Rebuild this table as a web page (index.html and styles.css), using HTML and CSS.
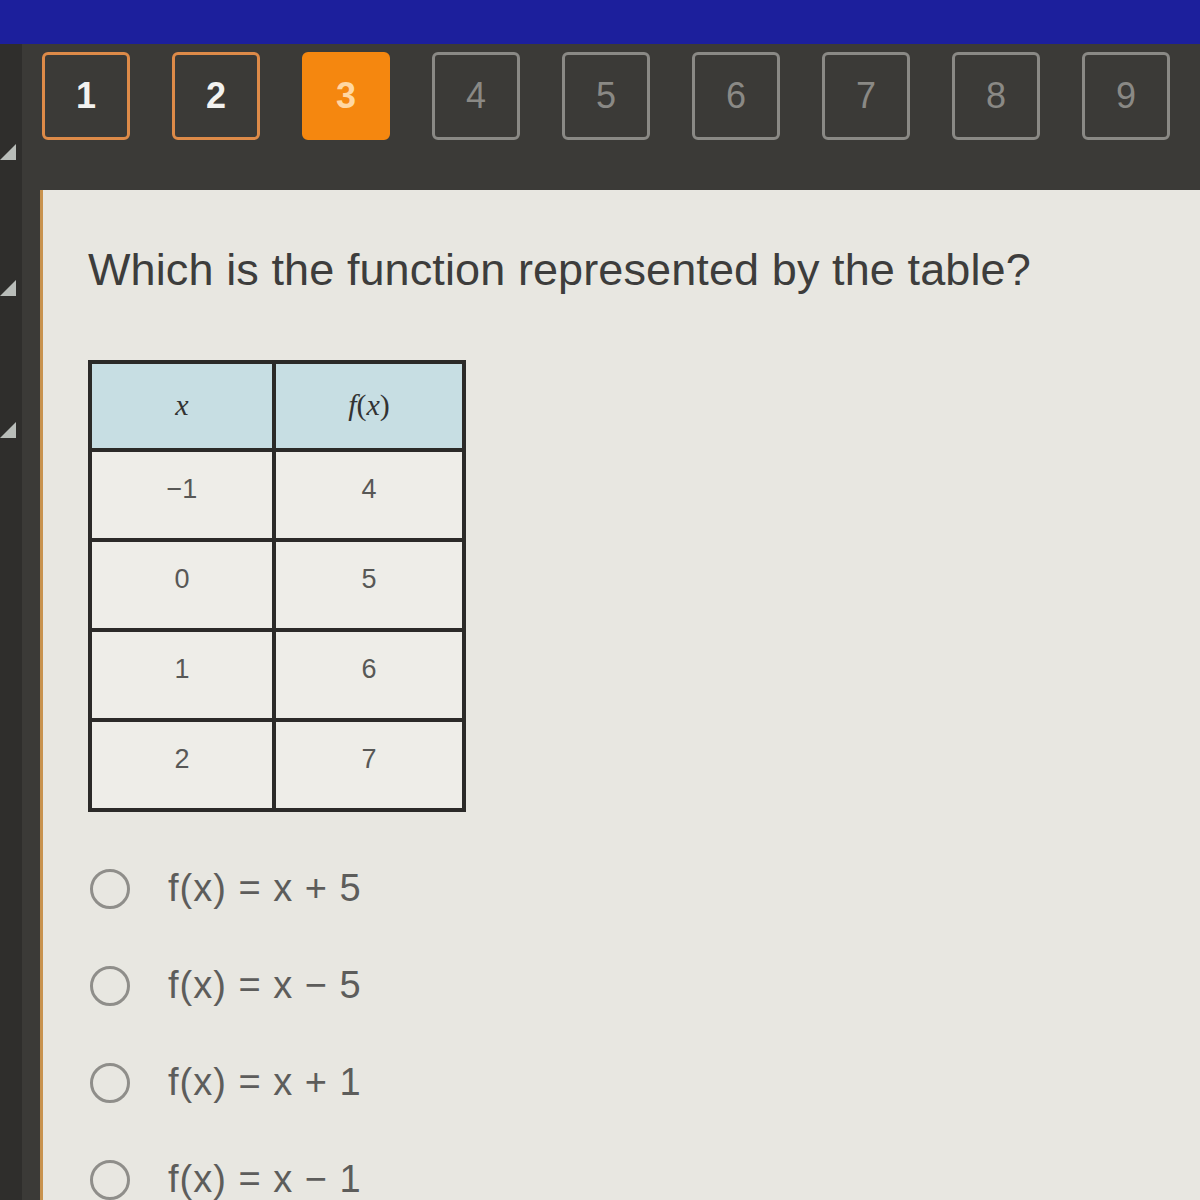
FILE: index.html
```html
<!DOCTYPE html>
<html>
<head>
<meta charset="utf-8">
<link rel="stylesheet" href="styles.css">
</head>
<body>
<div class="screen">
  <div class="topbar"></div>
  <div class="navband">
    <div class="side-strip"><span class="tri"></span></div>
    <div class="nav">
      <div class="qbtn done">1</div>
      <div class="qbtn done">2</div>
      <div class="qbtn current">3</div>
      <div class="qbtn">4</div>
      <div class="qbtn">5</div>
      <div class="qbtn">6</div>
      <div class="qbtn">7</div>
      <div class="qbtn">8</div>
      <div class="qbtn">9</div>
    </div>
  </div>
  <div class="main">
    <div class="side-strip tall">
      <span class="tri t1"></span>
      <span class="tri t2"></span>
    </div>
    <div class="panel">
      <p class="question">Which is the function represented by the table?</p>
      <table class="ftable">
        <tr class="head"><th><i>x</i></th><th><i>f</i>(<i>x</i>)</th></tr>
        <tr><td>&minus;1</td><td>4</td></tr>
        <tr><td>0</td><td>5</td></tr>
        <tr><td>1</td><td>6</td></tr>
        <tr><td>2</td><td>7</td></tr>
      </table>
      <ul class="options">
        <li><span class="radio"></span><span class="opt">f(x) = x + 5</span></li>
        <li><span class="radio"></span><span class="opt">f(x) = x &minus; 5</span></li>
        <li><span class="radio"></span><span class="opt">f(x) = x + 1</span></li>
        <li><span class="radio"></span><span class="opt">f(x) = x &minus; 1</span></li>
      </ul>
    </div>
  </div>
</div>
</body>
</html>
```

FILE: styles.css
```css
html, body {
  margin: 0;
  padding: 0;
  background: #3a3936;
}
.screen {
  width: 1200px;
  height: 1200px;
  overflow: hidden;
  display: flex;
  flex-direction: column;
  font-family: "Liberation Sans", Arial, sans-serif;
}
.topbar {
  height: 44px;
  background: #1c1f9c;
  flex: none;
}
.navband {
  height: 146px;
  flex: none;
  display: flex;
  background: #3b3a37;
}
.side-strip {
  width: 22px;
  flex: none;
  background: #2f2e2c;
  position: relative;
  display: flex;
  flex-direction: column;
}
.tri {
  position: absolute;
  left: 0;
  width: 0;
  height: 0;
  border-right: 16px solid transparent;
  border-bottom: 16px solid #b9bdb9;
  transform: scaleX(-1);
}
.navband .tri { top: 100px; }
.main {
  flex: 1;
  display: flex;
  background: #3b3a37;
}
.tri.t1 { top: 90px; }
.tri.t2 { top: 232px; }
.nav {
  display: flex;
  gap: 42px;
  padding: 8px 0 0 20px;
  align-items: flex-start;
}
.qbtn {
  width: 88px;
  height: 88px;
  box-sizing: border-box;
  border: 3px solid #8a8985;
  border-radius: 6px;
  color: #8a8985;
  font-size: 36px;
  display: flex;
  align-items: center;
  justify-content: center;
}
.qbtn.done {
  border-color: #dd8a48;
  color: #f2f2f0;
  font-weight: bold;
}
.qbtn.current {
  background: #f5870f;
  border-color: #f5870f;
  color: #ffd7a3;
  font-weight: bold;
}
.panel {
  flex: 1;
  margin-left: 18px;
  background: #e8e7e1;
  border-left: 3px solid #c8934f;
  padding: 54px 0 0 45px;
}
.question {
  margin: 0 0 64px 0;
  font-size: 45px;
  color: #3d3d3c;
  letter-spacing: 0.1px;
}
.ftable {
  border-collapse: collapse;
  border: 4px solid #2b2a28;
  background: #eeede8;
  margin-bottom: 28px;
}
.ftable th, .ftable td {
  border: 4px solid #2b2a28;
  text-align: center;
  vertical-align: top;
  height: 90px;
  box-sizing: border-box;
  padding: 22px 0 0 0;
  font-size: 27px;
  font-weight: normal;
  color: #585856;
}
.ftable th { width: 184px; }
.ftable th + th { width: 190px; }
.ftable .head th {
  background: #c7dee3;
  font-family: "Liberation Serif", "Times New Roman", serif;
  font-size: 30px;
  color: #333;
  padding-top: 24px;
  height: 88px;
}
.options {
  list-style: none;
  margin: 0;
  padding: 0;
}
.options li {
  display: flex;
  align-items: center;
  height: 97px;
}
.radio {
  width: 34px;
  height: 34px;
  border: 3px solid #8f8e8a;
  border-radius: 50%;
  margin: 0 38px 0 2px;
  flex: none;
}
.opt {
  font-size: 38px;
  color: #5d5d5b;
  letter-spacing: 1px;
}
```
